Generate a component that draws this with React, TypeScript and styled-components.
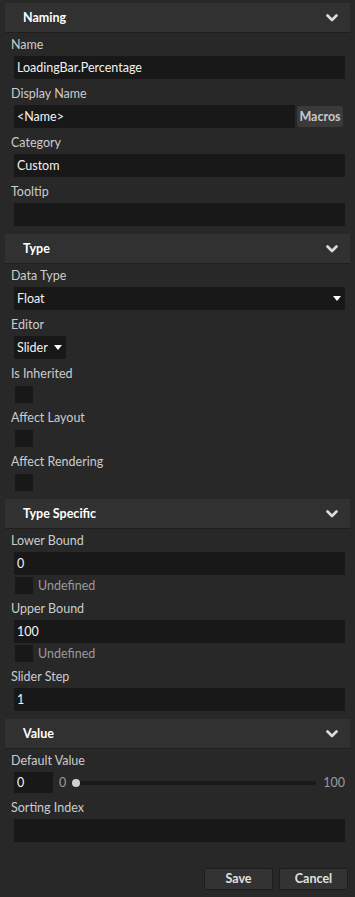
import React from "react";
import styled, { createGlobalStyle } from "styled-components";

const GlobalStyle = createGlobalStyle`
  html, body {
    margin: 0;
    padding: 0;
    background: #282828;
  }
  body {
    font-family: Lato, "Noto Sans", sans-serif;
    font-size: 12.5px;
    color: #c8c8c8;
  }
`;

const Panel = styled.div`
  min-height: 100vh;
  box-sizing: border-box;
  display: flex;
  flex-direction: column;
  padding: 3px 5px 7px;
`;

const Section = styled.section`
  display: flex;
  flex-direction: column;
`;

const SectionHeader = styled.div`
  height: 29px;
  display: flex;
  align-items: center;
  justify-content: space-between;
  padding: 0 12px 0 18px;
  background: #313131;
  border-bottom: 1px solid #1f1f1f;
`;

const HeaderTitle = styled.span`
  font-weight: 700;
  font-size: 12.5px;
  color: #ffffff;
`;

const SectionBody = styled.div`
  display: flex;
  flex-direction: column;
  gap: 7px;
  padding: 4px 5px 8px 9px;
`;

const Field = styled.div`
  display: flex;
  flex-direction: column;
`;

const Label = styled.div`
  height: 16px;
  line-height: 16px;
  margin: 0 0 3px -3px;
  color: #cccccc;
  white-space: nowrap;
`;

const TextBox = styled.div`
  flex: 1 1 auto;
  height: 23px;
  min-height: 23px;
  line-height: 23px;
  box-sizing: border-box;
  padding: 0 3px;
  background: #181818;
  color: #f2f2f2;
  white-space: nowrap;
`;

const Row = styled.div`
  display: flex;
  align-items: center;
  gap: 2px;
`;

const MacrosButton = styled.div`
  width: 46px;
  height: 21px;
  line-height: 21px;
  text-align: center;
  background: #3a3a3a;
  border-radius: 3px;
  color: #c8c8c8;
  font-weight: 700;
  margin-right: 2px;
`;

const Dropdown = styled.div<{ $width?: number }>`
  height: 23px;
  box-sizing: border-box;
  display: flex;
  align-items: center;
  justify-content: space-between;
  padding: 0 4px 0 3px;
  background: #181818;
  color: #f2f2f2;
  ${(p) => (p.$width ? `width: ${p.$width}px;` : "")}
`;

const Arrow = styled.span`
  width: 0;
  height: 0;
  border-left: 4.5px solid transparent;
  border-right: 4.5px solid transparent;
  border-top: 5px solid #ffffff;
`;

const Checkbox = styled.div`
  width: 18px;
  height: 17px;
  margin-left: 1px;
  background: #181818;
  flex: none;
`;

const CheckBoxWrap = styled.div`
  margin-top: 1px;
`;

const CheckRow = styled.div`
  display: flex;
  align-items: center;
  gap: 5px;
  margin-top: 2px;
  color: #9a9a9a;
`;

const SliderRow = styled.div`
  display: flex;
  align-items: center;
  height: 21px;
  color: #9a9a9a;
`;

const SliderValue = styled.div`
  width: 39px;
  height: 21px;
  line-height: 21px;
  box-sizing: border-box;
  padding: 0 3px;
  background: #181818;
  color: #f2f2f2;
`;

const SliderMin = styled.span`
  margin: 0 9px 0 6px;
`;

const Track = styled.div`
  flex: 1;
  height: 4px;
  border-radius: 2px;
  background: #191919;
  position: relative;
`;

const Thumb = styled.div`
  position: absolute;
  left: -3px;
  top: -2px;
  width: 8px;
  height: 8px;
  border-radius: 50%;
  background: #d0d0d0;
`;

const SliderMax = styled.span`
  margin-left: 7px;
`;

const Footer = styled.div`
  margin-top: auto;
  display: flex;
  justify-content: flex-end;
  gap: 6px;
  padding-right: 2px;
`;

const Button = styled.div`
  width: 69px;
  height: 22px;
  line-height: 20px;
  box-sizing: border-box;
  text-align: center;
  background: #333333;
  border: 1px solid #1c1c1c;
  border-radius: 2px;
  color: #e0e0e0;
  font-weight: 700;
`;

const Chevron = () => (
  <svg width="12" height="8" viewBox="0 0 12 8">
    <polyline
      points="1.5,1.5 6,6 10.5,1.5"
      fill="none"
      stroke="#dcdcdc"
      strokeWidth="2.6"
      strokeLinecap="round"
      strokeLinejoin="round"
    />
  </svg>
);

const Header = ({ title }: { title: string }) => (
  <SectionHeader>
    <HeaderTitle>{title}</HeaderTitle>
    <Chevron />
  </SectionHeader>
);

const TextField = ({ label, value }: { label: string; value?: string }) => (
  <Field>
    <Label>{label}</Label>
    <TextBox>{value}</TextBox>
  </Field>
);

const CheckField = ({ label }: { label: string }) => (
  <Field>
    <Label>{label}</Label>
    <CheckBoxWrap>
      <Checkbox />
    </CheckBoxWrap>
  </Field>
);

const BoundField = ({ label, value }: { label: string; value: string }) => (
  <Field>
    <Label>{label}</Label>
    <TextBox>{value}</TextBox>
    <CheckRow>
      <Checkbox />
      <span>Undefined</span>
    </CheckRow>
  </Field>
);

export default function App() {
  return (
    <>
      <GlobalStyle />
      <Panel>
        <Section>
          <Header title="Naming" />
          <SectionBody>
            <TextField label="Name" value="LoadingBar.Percentage" />
            <Field>
              <Label>Display Name</Label>
              <Row>
                <TextBox>&lt;Name&gt;</TextBox>
                <MacrosButton>Macros</MacrosButton>
              </Row>
            </Field>
            <TextField label="Category" value="Custom" />
            <TextField label="Tooltip" />
          </SectionBody>
        </Section>

        <Section>
          <Header title="Type" />
          <SectionBody>
            <Field>
              <Label>Data Type</Label>
              <Dropdown>
                <span>Float</span>
                <Arrow />
              </Dropdown>
            </Field>
            <Field>
              <Label>Editor</Label>
              <Dropdown $width={52}>
                <span>Slider</span>
                <Arrow />
              </Dropdown>
            </Field>
            <CheckField label="Is Inherited" />
            <CheckField label="Affect Layout" />
            <CheckField label="Affect Rendering" />
          </SectionBody>
        </Section>

        <Section>
          <Header title="Type Specific" />
          <SectionBody>
            <BoundField label="Lower Bound" value="0" />
            <BoundField label="Upper Bound" value="100" />
            <TextField label="Slider Step" value="1" />
          </SectionBody>
        </Section>

        <Section>
          <Header title="Value" />
          <SectionBody>
            <Field>
              <Label>Default Value</Label>
              <SliderRow>
                <SliderValue>0</SliderValue>
                <SliderMin>0</SliderMin>
                <Track>
                  <Thumb />
                </Track>
                <SliderMax>100</SliderMax>
              </SliderRow>
            </Field>
            <TextField label="Sorting Index" />
          </SectionBody>
        </Section>

        <Footer>
          <Button>Save</Button>
          <Button>Cancel</Button>
        </Footer>
      </Panel>
    </>
  );
}
